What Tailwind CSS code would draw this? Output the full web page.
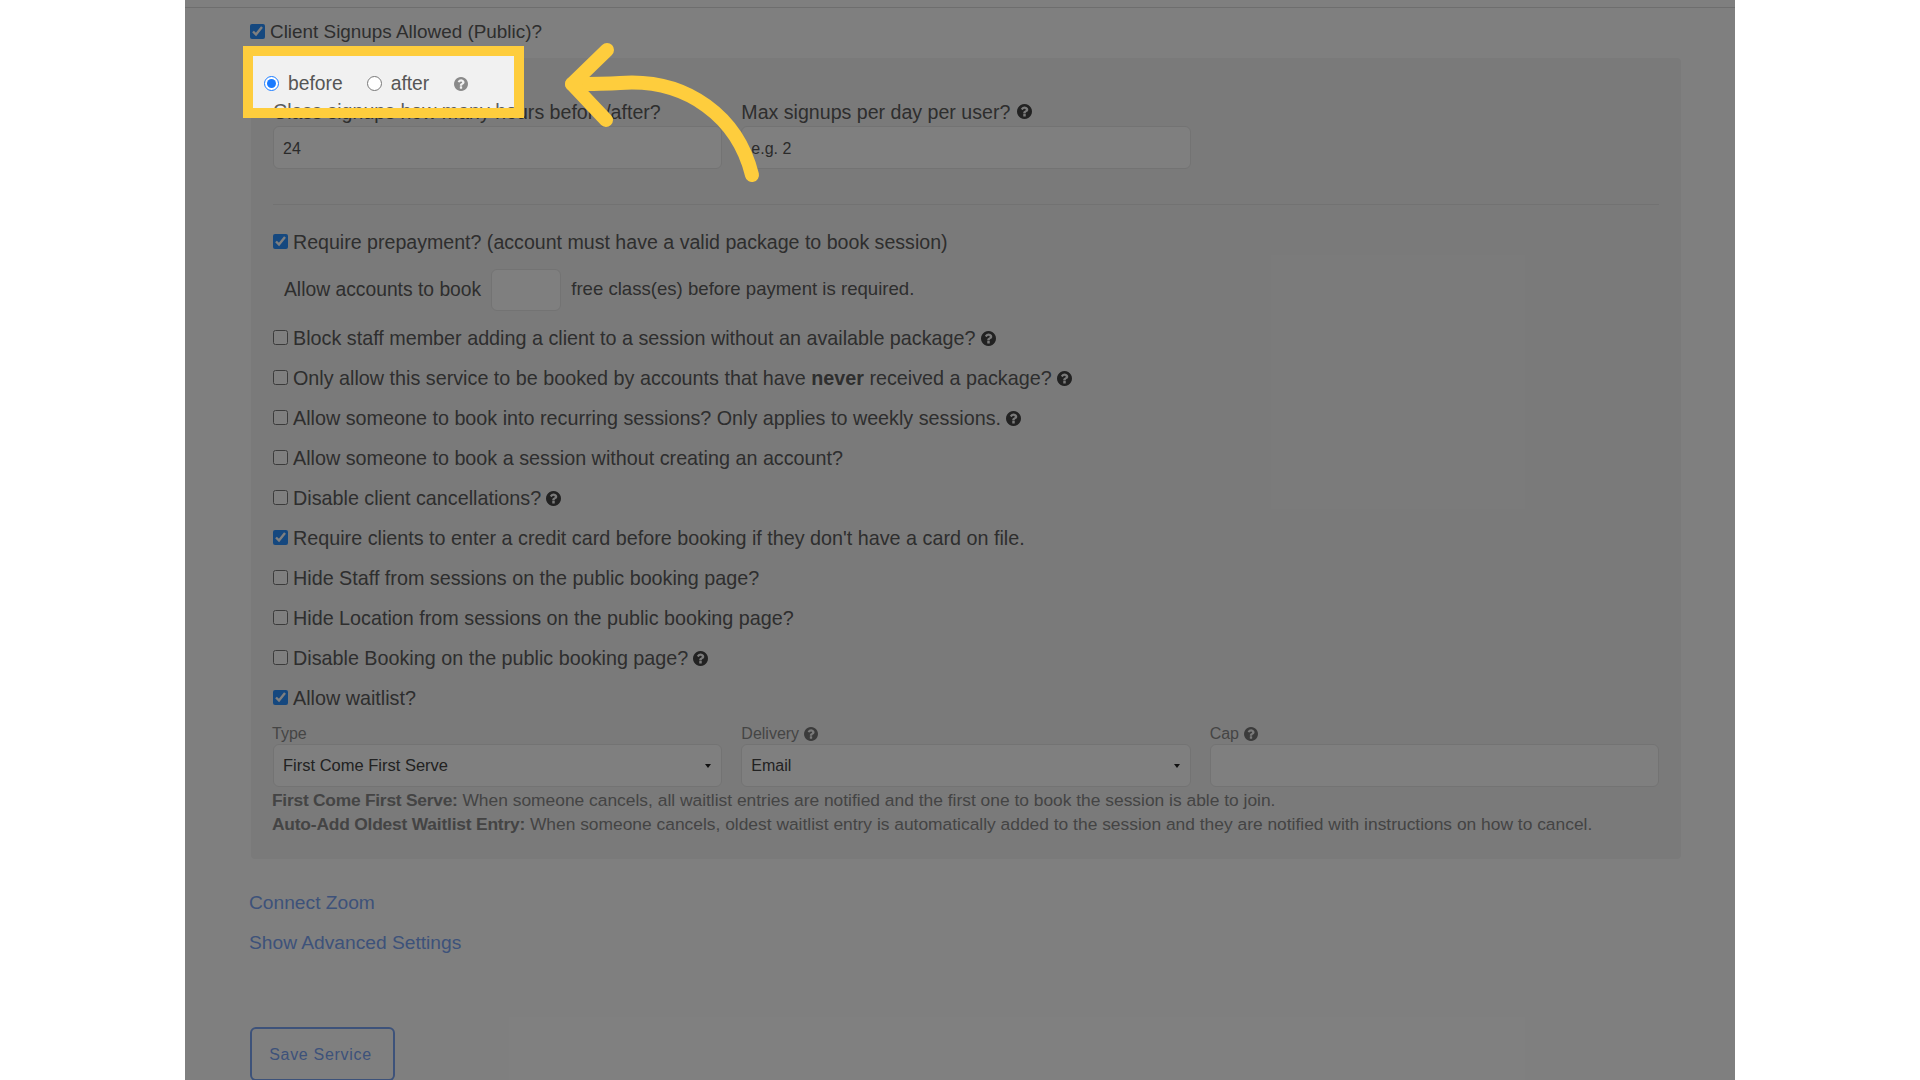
<!DOCTYPE html>
<html lang="en">
  <head>
    <meta charset="UTF-8" />
    <title>Edit Service</title>
    <script src="https://cdn.jsdelivr.net/npm/@tailwindcss/browser@4"></script>
  </head>
  <body class="bg-white font-['Liberation_Sans',Arial,sans-serif] text-[19.6px] text-[#5c5c5c] h-screen overflow-hidden">
    <svg class="hidden">
      <symbol id="help" viewBox="128 128 1536 1536">
        <path fill="currentColor" d="M1024 1376v-192q0-14-9-23t-23-9h-192q-14 0-23 9t-9 23v192q0 14 9 23t23 9h192q14 0 23-9t9-23zm256-672q0-88-55.5-163t-138.5-116-170-41q-243 0-371 213-15 24 8 42l132 100q7 6 19 6 16 0 25-12 53-68 86-92 34-24 86-24 48 0 85.5 26t37.5 59q0 38-20 61t-68 45q-63 28-115.5 86.5t-52.5 125.5v36q0 14 9 23t23 9h192q14 0 23-9t9-23q0-19 21.5-49.5t54.5-49.5q32-18 49-28.5t46-35 44.5-48 28-60.5 12.5-81zm384 192q0 209-103 385.5t-279.5 279.5-385.5 103-385.5-103-279.5-279.5-103-385.5 103-385.5 279.5-279.5 385.5-103 385.5 103 279.5 279.5 103 385.5z" />
      </symbol>
    </svg>

    <!-- Page column -->
    <div class="relative w-[1550px] h-[1080px] ml-[185px] bg-white overflow-hidden">
      <div class="h-[8px] border-b border-[#dcdcdc]"></div>

      <div class="pl-[65px]">
        <label class="h-[47px] pt-[1px] flex items-center gap-[5px] text-[18.9px]">
          <input type="checkbox" checked class="w-[15px] h-[15px] m-0 -mt-[2px] accent-[#2a90ff]" />
          Client Signups Allowed (Public)?
        </label>

        <!-- Signup settings panel -->
        <div class="mt-[3px] ml-px w-[1430px] bg-[#f5f5f5] rounded-[4px] pt-[40px] pb-[22px] px-[22px]">
          <div class="grid grid-cols-3 gap-x-[19px] w-[1386px]">
            <div>
              <div class="h-[26px] leading-[28px] mb-[2px]">Class signups how many hours before/after?</div>
              <input value="24" class="w-full h-[43px] pt-[3px] px-[9px] text-[16px] text-[#555] bg-white border border-[#e6e6e6] rounded-[6px]" />
            </div>
            <div>
              <div class="h-[26px] leading-[28px] mb-[2px] flex items-center gap-[7px] pt-[1px]">
                Max signups per day per user?
                <svg class="w-[15px] h-[15px] text-[#444]"><use href="#help" /></svg>
              </div>
              <input placeholder="e.g. 2" class="w-full h-[43px] pt-[3px] px-[9px] text-[16px] text-[#555] placeholder:text-[#555] bg-white border border-[#e6e6e6] rounded-[6px]" />
            </div>
          </div>

          <div class="mt-[35px] mb-[17px] w-[1386px] border-t border-[#e4e4e4]"></div>

          <div class="h-[40px] pt-[2px] flex items-center gap-[5px]">
            <input type="checkbox" checked class="w-[15px] h-[15px] m-0 -mt-[4px] accent-[#2a90ff]" />
            Require prepayment? (account must have a valid package to book session)
          </div>
          <div class="h-[56px] flex items-center pl-[11px]">
            <span class="text-[19.3px]">Allow accounts to book</span>
            <input class="w-[70px] h-[42px] ml-[10px] mr-[10px] bg-white border border-[#e6e6e6] rounded-[6px]" />
            <span class="text-[18.6px] -mt-[2px]">free class(es) before payment is required.</span>
          </div>
          <div class="text-[19.75px]">
            <div class="h-[40px] pt-[2px] flex items-center gap-[5px]">
              <input type="checkbox" class="w-[15px] h-[15px] m-0 -mt-[4px]" />
              Block staff member adding a client to a session without an available package?
              <svg class="w-[15px] h-[15px] -mt-[2px] text-[#444]"><use href="#help" /></svg>
            </div>
            <div class="h-[40px] pt-[2px] flex items-center gap-[5px]">
              <input type="checkbox" class="w-[15px] h-[15px] m-0 -mt-[4px]" />
              <span>Only allow this service to be booked by accounts that have <b>never</b> received a package?</span>
              <svg class="w-[15px] h-[15px] -mt-[2px] text-[#444]"><use href="#help" /></svg>
            </div>
            <div class="h-[40px] pt-[2px] flex items-center gap-[5px]">
              <input type="checkbox" class="w-[15px] h-[15px] m-0 -mt-[4px]" />
              Allow someone to book into recurring sessions? Only applies to weekly sessions.
              <svg class="w-[15px] h-[15px] -mt-[2px] text-[#444]"><use href="#help" /></svg>
            </div>
            <div class="h-[40px] pt-[2px] flex items-center gap-[5px]">
              <input type="checkbox" class="w-[15px] h-[15px] m-0 -mt-[4px]" />
              Allow someone to book a session without creating an account?
            </div>
            <div class="h-[40px] pt-[2px] flex items-center gap-[5px]">
              <input type="checkbox" class="w-[15px] h-[15px] m-0 -mt-[4px]" />
              Disable client cancellations?
              <svg class="w-[15px] h-[15px] -mt-[2px] text-[#444]"><use href="#help" /></svg>
            </div>
            <div class="h-[40px] pt-[2px] flex items-center gap-[5px]">
              <input type="checkbox" checked class="w-[15px] h-[15px] m-0 -mt-[4px] accent-[#2a90ff]" />
              Require clients to enter a credit card before booking if they don't have a card on file.
            </div>
            <div class="h-[40px] pt-[2px] flex items-center gap-[5px]">
              <input type="checkbox" class="w-[15px] h-[15px] m-0 -mt-[4px]" />
              Hide Staff from sessions on the public booking page?
            </div>
            <div class="h-[40px] pt-[2px] flex items-center gap-[5px]">
              <input type="checkbox" class="w-[15px] h-[15px] m-0 -mt-[4px]" />
              Hide Location from sessions on the public booking page?
            </div>
            <div class="h-[40px] pt-[2px] flex items-center gap-[5px]">
              <input type="checkbox" class="w-[15px] h-[15px] m-0 -mt-[4px]" />
              Disable Booking on the public booking page?
              <svg class="w-[15px] h-[15px] -mt-[2px] text-[#444]"><use href="#help" /></svg>
            </div>
            <div class="h-[40px] pt-[2px] flex items-center gap-[5px]">
              <input type="checkbox" checked class="w-[15px] h-[15px] m-0 -mt-[4px] accent-[#2a90ff]" />
              Allow waitlist?
            </div>
          </div>

          <!-- Waitlist options -->
          <div class="grid grid-cols-3 gap-x-[19px] w-[1386px] mt-[5px]">
            <div>
              <div class="h-[21px] leading-[21px] -ml-px text-[16px] text-[#8a8a8a]">Type</div>
              <div class="h-[43px] px-[9px] flex items-center justify-between text-[16.5px] text-[#444] bg-white border border-[#e6e6e6] rounded-[6px]">
                First Come First Serve
                <span class="-ml-px mr-px border-x-[3px] border-t-[4px] border-x-transparent border-t-[#222]"></span>
              </div>
            </div>
            <div>
              <div class="h-[21px] leading-[21px] text-[16px] text-[#8a8a8a] flex items-center gap-[5px]">
                Delivery
                <svg class="w-[14px] h-[14px] text-[#777]"><use href="#help" /></svg>
              </div>
              <div class="h-[43px] px-[9px] flex items-center justify-between text-[16px] text-[#444] bg-white border border-[#e6e6e6] rounded-[6px]">
                Email
                <span class="mr-px border-x-[3px] border-t-[4px] border-x-transparent border-t-[#222]"></span>
              </div>
            </div>
            <div>
              <div class="h-[21px] leading-[21px] text-[16px] text-[#8a8a8a] flex items-center gap-[5px]">
                Cap
                <svg class="w-[14px] h-[14px] text-[#777]"><use href="#help" /></svg>
              </div>
              <input class="w-full h-[43px] bg-white border border-[#e6e6e6] rounded-[6px]" />
            </div>
          </div>
          <div class="pt-[1px] pb-[1px] -ml-px text-[17.4px] leading-[24px] text-[#888]">
            <p><b class="tracking-[-0.25px]">First Come First Serve:</b> When someone cancels, all waitlist entries are notified and the first one to book the session is able to join.</p>
            <p><b class="tracking-[-0.2px]">Auto-Add Oldest Waitlist Entry:</b> When someone cancels, oldest waitlist entry is automatically added to the session and they are notified with instructions on how to cancel.</p>
          </div>
        </div>

        <a href="#" class="block -ml-px mt-[32px] h-[24px] leading-[24px] text-[19.2px] text-[#7ba4f4]">Connect Zoom</a>
        <a href="#" class="block -ml-px mt-[16px] h-[24px] leading-[24px] text-[19.2px] text-[#7ba4f4]">Show Advanced Settings</a>
        <button class="block mt-[72px] w-[145px] h-[54px] pt-[2px] pr-[4px] text-[16px] tracking-[0.7px] text-[#7ba4f4] border-[2px] border-[#7ba4f4] rounded-[6px]">Save Service</button>
      </div>

      <!-- Dimming layer -->
      <div class="absolute inset-0 bg-black/50"></div>
    </div>

    <!-- Highlighted area -->
    <div class="absolute left-[243px] top-[46px] w-[281px] h-[72px] border-[10px] border-[#fecd3d] bg-[#f1f1f1] overflow-hidden">
      <div class="h-[52px] flex items-center pt-[3px] text-[#555] text-[19.3px] relative">
        <input type="radio" name="when" checked class="w-[15px] h-[15px] m-0 ml-[11px] accent-[#1a7bff]" />
        <span class="ml-[9px] mt-[2px]">before</span>
        <input type="radio" name="when" class="w-[15px] h-[15px] m-0 ml-[24px]" />
        <span class="ml-[9px] mt-[2px]">after</span>
        <svg class="w-[14px] h-[14px] ml-[25px] text-[#8a8a8a]"><use href="#help" /></svg>
        <span class="absolute left-[20px] top-[42px] leading-[26px] text-[19.6px] whitespace-nowrap text-[#5c5c5c]">Class signups how many hours before/after?</span>
      </div>
    </div>

    <!-- Arrow -->
    <svg class="absolute left-0 top-0 pointer-events-none" width="800" height="200" fill="none" stroke="#fecd3d" stroke-width="14" stroke-linecap="round" stroke-linejoin="round">
      <path d="M752 175C738 118 688 78 620 83C604 84 590 84 572 84" />
      <path d="M607 50L572 84L606 120" />
    </svg>
  </body>
</html>
